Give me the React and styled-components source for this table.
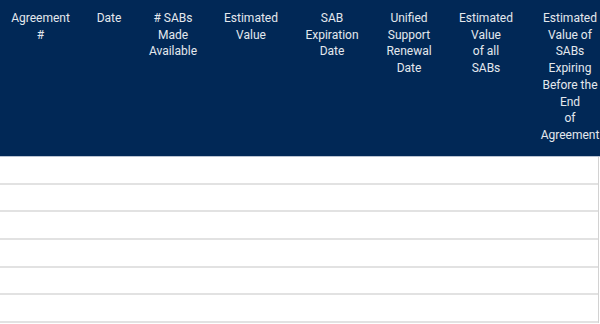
import React from 'react';
import styled, { createGlobalStyle } from 'styled-components';

const GlobalStyle = createGlobalStyle`
  html, body {
    margin: 0;
    padding: 0;
    background: #ffffff;
  }
  body {
    font-family: Roboto, "Noto Sans", Arial, sans-serif;
  }
`;

const columns = [
  { width: 81, label: ['Agreement', '#'] },
  { width: 56, label: ['Date'] },
  { width: 72, label: ['# SABs', 'Made', 'Available'] },
  { width: 84, label: ['Estimated', 'Value'] },
  { width: 78, label: ['SAB', 'Expiration', 'Date'] },
  { width: 76, label: ['Unified', 'Support', 'Renewal', 'Date'] },
  { width: 78, label: ['Estimated', 'Value', 'of all', 'SABs'] },
  { width: 90, label: ['Estimated', 'Value of', 'SABs', 'Expiring', 'Before the', 'End', 'of', 'Agreement'] },
];

const template = columns.map(c => `${c.width}px`).join(' ');

const Wrapper = styled.div`
  width: 600px;
  height: 324px;
  overflow: hidden;
`;

const HeaderRow = styled.div`
  display: grid;
  grid-template-columns: ${template};
  height: 156px;
  background: #012856;
  border-bottom: 1px solid #b9c3d2;
`;

const HeaderCell = styled.div`
  padding-top: 10px;
  text-align: center;
  color: #e4e8ee;
  font-size: 12px;
  line-height: 16.7px;
  white-space: nowrap;
`;

const Body = styled.div`
  width: 598px;
  border-right: 1px solid #d2d2d2;
`;

const Row = styled.div`
  height: 25.7px;
  border-bottom: 2px solid #e2e2e2;
`;

export default function App() {
  return (
    <Wrapper>
      <GlobalStyle />
      <HeaderRow>
        {columns.map((col, i) => (
          <HeaderCell key={i}>
            {col.label.map((line, j) => (
              <div key={j}>{line}</div>
            ))}
          </HeaderCell>
        ))}
      </HeaderRow>
      <Body>
        {[0, 1, 2, 3, 4, 5].map(i => (
          <Row key={i} />
        ))}
      </Body>
    </Wrapper>
  );
}
